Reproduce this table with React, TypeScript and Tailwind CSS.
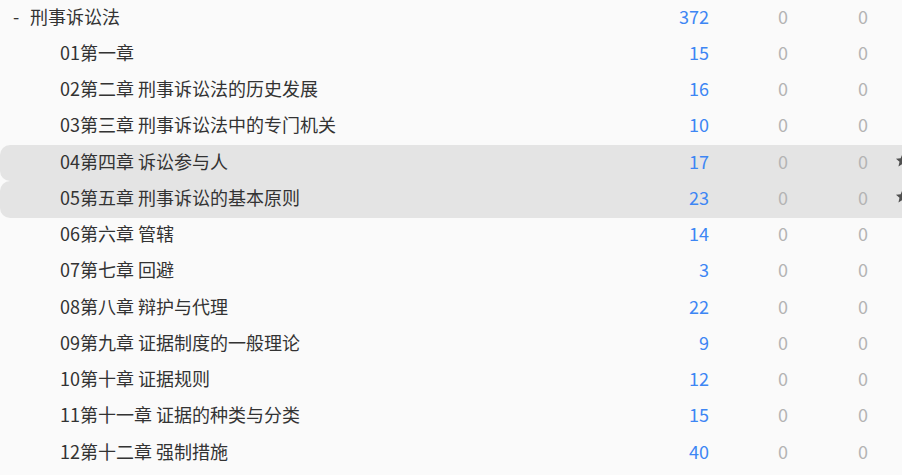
const chapters = [
  { name: "01第一章", count: 15 },
  { name: "02第二章 刑事诉讼法的历史发展", count: 16 },
  { name: "03第三章 刑事诉讼法中的专门机关", count: 10 },
  { name: "04第四章 诉讼参与人", count: 17, active: true },
  { name: "05第五章 刑事诉讼的基本原则", count: 23, active: true },
  { name: "06第六章 管辖", count: 14 },
  { name: "07第七章 回避", count: 3 },
  { name: "08第八章 辩护与代理", count: 22 },
  { name: "09第九章 证据制度的一般理论", count: 9 },
  { name: "10第十章 证据规则", count: 12 },
  { name: "11第十一章 证据的种类与分类", count: 15 },
  { name: "12第十二章 强制措施", count: 40 },
];

function Star() {
  return (
    <svg width="15" height="15" viewBox="0 0 24 24" className="shrink-0 mb-[2px]">
      <path
        d="M12 1.5l3 6.9 7.5.7-5.7 5 1.7 7.4-6.5-3.9-6.5 3.9 1.7-7.4-5.7-5 7.5-.7z"
        fill="#505050"
      />
    </svg>
  );
}

function Row({
  children,
  count,
  active,
}: {
  children: React.ReactNode;
  count: number;
  active?: boolean;
}) {
  return (
    <div
      className={
        "flex h-[36.25px] w-[960px] items-center pb-[4px] " +
        (active ? "rounded-l-[10px] bg-[#e4e4e4]" : "")
      }
    >
      <div className="w-[609px] shrink-0 flex items-center text-[#333333]">{children}</div>
      <div className="w-[100px] shrink-0 text-right text-[#3d86f4]">{count}</div>
      <div className="w-[79px] shrink-0 text-right text-[#b4b4b4]">0</div>
      <div className="w-[80px] shrink-0 text-right text-[#b4b4b4]">0</div>
      <div className="ml-[27px] w-[44px] shrink-0 flex items-center">
        {active && <Star />}
      </div>
    </div>
  );
}

export default function App() {
  return (
    <div
      className="h-[475px] w-[902px] overflow-hidden bg-[#fafafa] text-[18px]"
      style={{ fontFamily: '"Noto Sans CJK SC", "Noto Sans", sans-serif' }}
    >
      <Row count={372}>
        <span className="pl-[13px] w-[30px]">-</span>
        <span>刑事诉讼法</span>
      </Row>
      {chapters.map((c) => (
        <Row key={c.name} count={c.count} active={c.active}>
          <span className="pl-[60px]">{c.name}</span>
        </Row>
      ))}
    </div>
  );
}
